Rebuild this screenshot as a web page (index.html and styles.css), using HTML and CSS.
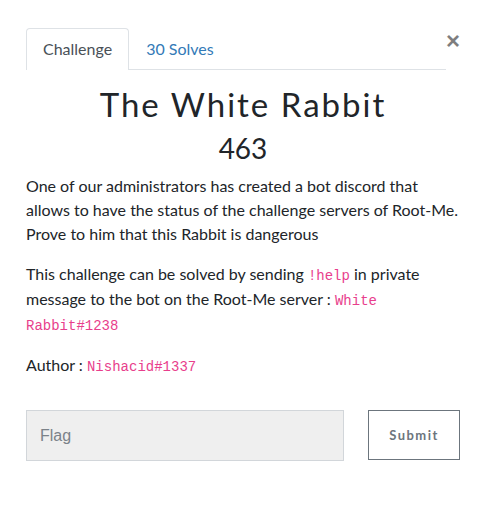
FILE: index.html
```html
<!DOCTYPE html>
<html lang="en">
<head>
<meta charset="utf-8">
<title>The White Rabbit</title>
<link rel="stylesheet" href="styles.css">
</head>
<body>
<div class="modal">
  <div class="head">
    <ul class="tabs">
      <li class="tab active">Challenge</li>
      <li class="tab link">30 Solves</li>
    </ul>
    <button class="close" type="button">&times;</button>
  </div>
  <h2 class="name">The White Rabbit</h2>
  <h3 class="value">463</h3>
  <div class="desc">
    <p>One of our administrators has created a bot discord that allows to have the status of the challenge servers of Root-Me. Prove to him that this Rabbit is dangerous</p>
    <p>This challenge can be solved by sending <code>!help</code> in private message to the bot on the Root-Me server : <code>White Rabbit#1238</code></p>
    <p>Author : <code>Nishacid#1337</code></p>
  </div>
  <form class="flag-form">
    <input class="flag" type="text" placeholder="Flag">
    <button class="submit" type="button">Submit</button>
  </form>
</div>
</body>
</html>
```
FILE: styles.css
```css
html, body {
  margin: 0;
  padding: 0;
  background: #fff;
}
body {
  font-family: Lato, "Noto Sans", sans-serif;
  font-size: 16px;
  line-height: 1.5;
  color: #212529;
}
.modal {
  padding: 28px 27px 0 26px;
}
.head {
  display: flex;
  align-items: flex-start;
}
.tabs {
  flex: 1;
  display: flex;
  list-style: none;
  margin: 0;
  padding: 0;
  border-bottom: 1px solid #dee2e6;
}
.tab {
  padding: 8px 16px;
  border: 1px solid transparent;
  border-bottom: none;
  border-radius: 4px 4px 0 0;
  margin-bottom: -1px;
}
.tab.active {
  color: #495057;
  background: #fff;
  border-color: #dee2e6;
  padding-bottom: 9px;
}
.tab.link {
  color: #337ab7;
}
.close {
  width: 14px;
  padding: 0;
  margin: 0;
  border: 0;
  background: transparent;
  font-family: "Liberation Sans", Arial, sans-serif;
  font-size: 24px;
  font-weight: 700;
  line-height: 1;
  color: #000;
  opacity: 0.5;
  text-align: right;
  margin-top: 1px;
}
.name {
  margin: 15px 0 0;
  text-align: center;
  font-family: Lato, sans-serif;
  font-weight: 400;
  font-size: 33px;
  line-height: 1.2;
  letter-spacing: 2px;
  color: #212529;
}
.value {
  margin: 7px 0 0;
  text-align: center;
  font-family: Lato, sans-serif;
  font-weight: 400;
  font-size: 28px;
  line-height: 1.2;
}
.desc {
  margin-top: 9px;
}
.desc p {
  margin: 0 0 16px;
}
code {
  font-family: "Liberation Mono", "Courier New", monospace;
  font-size: 87.5%;
  color: #e83e8c;
}
.flag-form {
  display: flex;
  gap: 24px;
  margin-top: 32px;
  align-items: flex-start;
}
.flag {
  flex: 1;
  min-width: 0;
  height: 51px;
  box-sizing: border-box;
  padding: 0 13px;
  border: 1px solid #d2d6da;
  background: #efefef;
  font-family: "Liberation Sans", Arial, sans-serif;
  font-size: 16px;
  color: #495057;
  outline: none;
}
.flag::placeholder {
  color: #7b8289;
  opacity: 1;
}
.submit {
  width: 92px;
  height: 50px;
  box-sizing: border-box;
  border: 1px solid #6c757d;
  background: #fff;
  color: #6c757d;
  font-family: Lato, sans-serif;
  font-weight: 700;
  font-size: 13px;
  letter-spacing: 1.5px;
  padding: 0;
}
```
